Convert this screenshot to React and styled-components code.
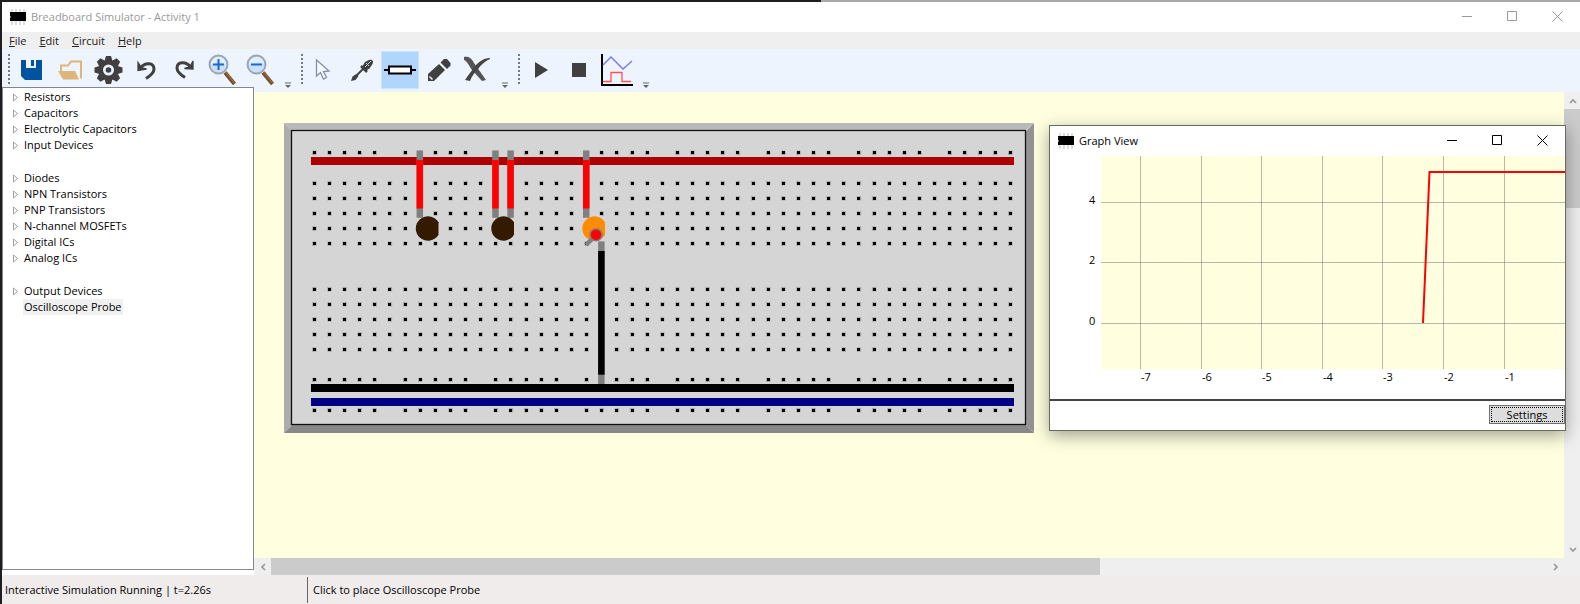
import React from "react";
import styled, { createGlobalStyle, css } from "styled-components";

const GlobalStyle = createGlobalStyle`
  *, *::before, *::after { box-sizing: border-box; }
  body { margin: 0; background: #fff; }
  button { font: inherit; color: inherit; padding: 0; border: 0; background: none; }
  ul { list-style: none; margin: 0; padding: 0; }
  svg { display: block; flex: none; }
`;

const UI_FONT = `"Open Sans", "Noto Sans", sans-serif`;

const Frame = styled.div`
  position: relative;
  display: flex;
  flex-direction: column;
  min-height: 100vh;
  border-left: 2px solid #1f1f22;
  border-top: 2px solid #a8a8a8;
  background: #fff;
  color: #000;
  font: 11px/16px ${UI_FONT};
  &::before {
    content: "";
    position: absolute;
    top: -2px;
    left: -2px;
    width: 52%;
    height: 2px;
    background: #1f1f22;
  }
`;

const TitleBar = styled.header`
  display: flex;
  align-items: center;
  height: 30px;
  padding: 0 0 1px 8px;
  background: #fff;
  color: ${(p) => (p.$active ? "#000" : "#999")};
`;

const Title = styled.h1`
  flex: 1;
  margin: 0 0 0 5px;
  font-size: 11px;
  font-weight: 400;
`;

const CaptionButton = styled.button`
  display: grid;
  place-items: center;
  width: 45px;
  height: 29px;
`;

const MenuBar = styled.nav`
  display: flex;
  height: 17px;
  background: #efefef;
`;

const MenuItem = styled.button`
  padding: 0 6px 0 7px;
  line-height: 17px;
  color: #222;
  &::first-letter { text-decoration: underline; }
`;

const ToolTray = styled.div`
  display: flex;
  gap: 4px;
  height: 43px;
  background: #edf4fd;
`;

const ToolGroup = styled.div`
  display: flex;
  padding-top: 2px;
`;

const Grip = styled.span`
  width: 2px;
  height: 31px;
  margin: 3px 2px 0 6px;
  background: repeating-linear-gradient(#77797d 0 2px, transparent 2px 4px);
`;

const ToolButton = styled.button`
  display: grid;
  place-items: center;
  width: 38px;
  height: 38px;
  ${(p) => p.$selected && css`background: #b1d6fd; border: 1px solid #cfe4fb;`}
`;

const OverflowButton = styled.button`
  display: flex;
  align-items: flex-end;
  justify-content: flex-end;
  width: 13px;
  height: 38px;
`;

const Workspace = styled.main`
  position: relative;
  display: flex;
  flex: 1;
`;

const Sidebar = styled.aside`
  position: relative;
  width: 252px;
  margin: -5px 0 5px;
  padding-top: 1px;
  border: 1px solid #828790;
  background: #fff;
`;

const TreeRow = styled.li`
  display: flex;
  align-items: center;
  height: ${(p) => (p.$blank ? "17px" : "16px")};
  padding-left: 9px;
`;

const Twisty = styled.span`
  width: 11px;
`;

const TreeLabel = styled.button`
  padding: 0 1px;
  line-height: 16px;
  background: ${(p) => (p.$selected ? "#f0f0f0" : "none")};
`;

const Viewport = styled.div`
  display: grid;
  flex: 1;
  min-width: 0;
  grid-template-columns: minmax(0, 1fr) 16px;
  grid-template-rows: 1fr 17px;
  background: #efefef;
`;

const Canvas = styled.section`
  overflow: hidden;
  padding: 31px 30px;
  background: #ffffe0;
`;

const ScrollBar = styled.div`
  display: flex;
  flex-direction: ${(p) => (p.$vertical ? "column" : "row")};
  background: #efefef;
`;

const ScrollButton = styled.button`
  display: grid;
  place-items: center;
  width: 17px;
  height: 17px;
`;

const ScrollTrack = styled.div`
  display: grid;
  flex: 1;
  ${(p) => (p.$vertical ? css`grid-template-rows: 23% 1fr;` : css`grid-template-columns: 65% 1fr;`)}
`;

const ScrollThumb = styled.div`
  background: #cbcbcb;
`;

const StatusBar = styled.footer`
  display: flex;
  align-items: center;
  height: 29px;
  background: #f0ecec;
`;

const StatusCell = styled.div`
  display: flex;
  align-items: center;
  height: 26px;
  padding-left: ${(p) => (p.$divided ? "5px" : "3px")};
  width: ${(p) => (p.$divided ? "auto" : "305px")};
  border-left: ${(p) => (p.$divided ? "1px solid #666" : "0")};
`;

const GraphWindow = styled.section`
  position: absolute;
  top: 33px;
  right: 14px;
  width: 517px;
  border: 1px solid #6a6a62;
  background: #fff;
  box-shadow: 0 5px 16px rgba(0, 0, 0, 0.36);
`;

const GraphFooter = styled.div`
  display: flex;
  justify-content: flex-end;
  height: 31px;
  padding-top: 4px;
  border-top: 2px solid #444;
`;

const SettingsButton = styled.button`
  width: 76px;
  height: 19px;
  line-height: 15px;
  border: 1px solid #707070;
  background: #ddd;
  outline: 1px dotted #000;
  outline-offset: -3px;
`;

const ChipIcon = () => (
  <svg width="16" height="16" viewBox="0 0 16 16" aria-hidden="true">
    <path d="M2 0v16M6 0v16M10 0v16M14 0v16" stroke="#ddd" strokeWidth="2" />
    <path d="M0 3h16v9H0z" fill="#000" />
    <path d="M0 7h1v2H0z" fill="#777" />
  </svg>
);

const WindowControls = () => (
  <>
    <CaptionButton aria-label="Minimize">
      <svg width="11" height="11" stroke="currentColor"><path d="M0 5.500h10" /></svg>
    </CaptionButton>
    <CaptionButton aria-label="Maximize">
      <svg width="11" height="11" stroke="currentColor" fill="none"><path d="M.5 .5h9v9h-9z" /></svg>
    </CaptionButton>
    <CaptionButton aria-label="Close">
      <svg width="11" height="11" stroke="currentColor"><path d="M.5 .5l10 10M10.500 .5l-10 10" /></svg>
    </CaptionButton>
  </>
);

const Icon = ({ children }) => (
  <svg width="36" height="36" viewBox="0 0 36 36" fill="none" aria-hidden="true">{children}</svg>
);

const SaveIcon = () => (
  <Icon>
    <path d="M8 8h21v20H12l-4-4z" fill="#0053a0" />
    <path d="M13 8h10v8H13z" fill="#edf4fd" />
    <path d="M18 8h3v6h-3z" fill="#0053a0" />
  </Icon>
);

const OpenIcon = () => (
  <Icon>
    <path d="M10 20v-6.500h7l3-4h10v17" stroke="#dfb67a" strokeWidth="2" />
    <path d="M7 19h17l4 8.500H12z" fill="#dfb67a" />
  </Icon>
);

const GearIcon = () => (
  <Icon>
    <g fill="#404040">
      {[0, 45, 90, 135].map((a) => (
        <path key={a} d="M17 4h5l1.500 5v18L22 32h-5l-1.500-5V9z" transform={`rotate(${a} 19.500 18)`} />
      ))}
      <circle cx="19.500" cy="18" r="10" />
    </g>
    <circle cx="19.500" cy="18" r="5.500" fill="#edf4fd" />
    <circle cx="19.500" cy="18" r="2.800" fill="#404040" />
  </Icon>
);

const UndoIcon = () => (
  <Icon>
    <path d="M13.500 16C18 10 27 10.500 27 17c0 4-4 7-8 9.500" stroke="#404040" strokeWidth="3" />
    <path d="M11 10.500v8l8.500-1.500-5-1.500z" fill="#404040" stroke="#404040" strokeWidth="1.300" />
  </Icon>
);

const RedoIcon = () => (
  <Icon>
    <path d="M25.500 15C21 9 12 9.500 12 16c0 4 4 7 8 9.500" stroke="#404040" strokeWidth="3" />
    <path d="M28 9v8l-8.500-.5 5.500-2z" fill="#404040" stroke="#404040" strokeWidth="1.300" />
  </Icon>
);

const ZoomIcon = ({ plus }) => (
  <Icon>
    <path d="M22 20.500l9.500 11.500" stroke="#77502f" strokeWidth="4" />
    <path d="M22.500 20l9 11" stroke="#a8784d" strokeWidth="1" />
    <circle cx="15.500" cy="12.500" r="9" fill="#c9e1fd" stroke="#9ca6b2" strokeWidth="2" />
    <path d="M8 12.500a7.500 7.500 0 0115 0c-4-3-10-2-15 0z" fill="#e2effe" />
    <path d="M10 12.500h11" stroke="#1d69cf" strokeWidth="2" />
    {plus && <path d="M15.500 7v11" stroke="#1d69cf" strokeWidth="2" />}
  </Icon>
);

const PointerIcon = () => (
  <Icon>
    <path d="M10.500 8v16l4-3.500 3 6.500 3-1.500-3-6 5.500-.5z" fill="#f7fafe" stroke="#8491a3" strokeWidth="1.300" />
  </Icon>
);

const ScrewdriverIcon = () => (
  <Icon>
    <path d="M7 29l1.500-4.500 4-2.500 2 2-3 4z" fill="#404040" />
    <path d="M12 24l8-8" stroke="#404040" strokeWidth="2" />
    <path d="M17 14l6 6" stroke="#404040" strokeWidth="2.500" />
    <path d="M18 15l3-5 4-2c3-1 5 1 3.500 4l-3 4.500-4 2.500z" fill="#404040" />
    <path d="M21 15l6-6M22 11l3 3" stroke="#cbd0d6" />
  </Icon>
);

const ResistorIcon = () => (
  <Icon>
    <path d="M2 18h32" stroke="#000" strokeWidth="2" />
    <path d="M7 14.500h22v7H7z" fill="#fff" stroke="#000" strokeWidth="2" />
  </Icon>
);

const PencilIcon = () => (
  <Icon>
    <path d="M8 29v-7L19 12l6 6-11 11z" fill="#404040" />
    <path d="M20.500 10.500L24 7h3l3.500 4v2.500L27 17z" fill="#404040" />
    <path d="M9.500 24.500l3 3" stroke="#edf4fd" strokeWidth="1.500" />
  </Icon>
);

const DeleteIcon = () => (
  <Icon>
    <path d="M6 5c5-1 8 2 10 6l12 17-4 1L14 18C10 12 9 9 6 8z" fill="#555" />
    <path d="M32 6c-7 0-12 4-17 11-4 5-6 8-8 11l5 1c2-5 4-8 8-12 4-5 7-8 12-10z" fill="#454545" />
  </Icon>
);

const PlayIcon = () => (
  <Icon><path d="M12 10l13 8-13 8z" fill="#404040" /></Icon>
);

const StopIcon = () => (
  <Icon><path d="M11 11h14v14H11z" fill="#404040" /></Icon>
);

const ScopeIcon = () => (
  <Icon>
    <path d="M3 2v31h31" stroke="#000" strokeWidth="2" />
    <path d="M4 13l8-8 12 12 9-8" stroke="#7474ff" strokeWidth="1.300" />
    <path d="M4 29.500h8v-9h11v9h9" stroke="#ff5252" strokeWidth="1.300" />
  </Icon>
);

const Overflow = () => (
  <OverflowButton aria-label="More tools">
    <svg width="6" height="7"><path d="M0 1h6" stroke="#666" /><path d="M0 3h6L3 6z" fill="#666" /></svg>
  </OverflowButton>
);

const toolGroups = [
  [
    ["Save", SaveIcon],
    ["Open", OpenIcon],
    ["Options", GearIcon],
    ["Undo", UndoIcon],
    ["Redo", RedoIcon],
    ["Zoom in", () => <ZoomIcon plus />],
    ["Zoom out", ZoomIcon],
  ],
  [
    ["Select", PointerIcon],
    ["Adjust", ScrewdriverIcon],
    ["Component", ResistorIcon],
    ["Draw wire", PencilIcon],
    ["Delete", DeleteIcon],
  ],
  [
    ["Run", PlayIcon],
    ["Stop", StopIcon],
    ["Graph", ScopeIcon],
  ],
];

const treeItems = [
  "Resistors", "Capacitors", "Electrolytic Capacitors", "Input Devices", null,
  "Diodes", "NPN Transistors", "PNP Transistors", "N-channel MOSFETs", "Digital ICs", "Analog ICs", null,
  "Output Devices",
];

const PITCH = 15.13;
const colX = (c) => 30.3 + c * PITCH;
const rowY = (r) => 29.9 + r * PITCH;
const railRows = [0, 15, 17];
const fieldRows = [2, 3, 4, 5, 6, 9, 10, 11, 12, 13];
const columns = Array.from({ length: 47 }, (_, i) => i);

const Hole = ({ c, r }) => (
  <>
    <rect x={colX(c) - 2.2} y={rowY(r) - 2.2} width="4.400" height="4.400" fill="#a8a8a8" />
    <rect x={Math.round(colX(c) - 1.5)} y={Math.round(rowY(r) - 1.5)} width="3" height="3" fill="#000" />
  </>
);

const Wire = ({ c, top, bottom, color }) => (
  <g strokeWidth="6.500">
    <path d={`M${colX(c) - 0.4} ${top}V${bottom}`} stroke="#808080" />
    <path d={`M${colX(c) - 0.4} ${top + 9.5}V${bottom - 9.3}`} stroke={color} />
  </g>
);

const Led = ({ x, color }) => (
  <path d={`M${x + 10.5} 99.300a12.200 12.200 0 1 0 0 12.400z`} fill={color} />
);

const Breadboard = () => (
  <svg width="750" height="310" viewBox="0 0 750 310" role="img" aria-label="Breadboard">
    <path d="M0 0h750l-8 7H7z" fill="#b9b9b9" />
    <path d="M0 0l8 8v294l-8 8z" fill="#acacac" />
    <path d="M750 0l-8 8v294l8 8z" fill="#939393" />
    <path d="M0 310l8-8h734l8 8z" fill="#888" />
    <rect x="7.500" y="7.500" width="734" height="294" fill="#d5d5d5" stroke="#111" strokeWidth="1.300" />
    {railRows.map((r) => columns.filter((c) => c % 6 !== 5).map((c) => <Hole key={`${r}-${c}`} c={c} r={r} />))}
    {fieldRows.map((r) => columns.map((c) => <Hole key={`${r}-${c}`} c={c} r={r} />))}
    <path d="M27 34h703v8H27z" fill="#ad0000" />
    <path d="M27 261h703v8H27z" fill="#000" />
    <path d="M27 275h703v8H27z" fill="#000084" />
    {[7, 12, 13, 18].map((c) => <Wire key={c} c={c} top={27.5} bottom={94.8} color="#f00" />)}
    <Wire c={19} top={118.5} bottom={261} color="#000" />
    <Led x={144} color="#331a00" />
    <Led x={219.500} color="#331a00" />
    <Led x={310.500} color="#ff8c00" />
    <path d="M302 122l7-7" stroke="#808080" strokeWidth="4.500" />
    <circle cx="312" cy="111.700" r="6" fill="#f00" stroke="#808080" strokeWidth="1.600" />
  </svg>
);

const ChartText = styled.text`
  font: 11px ${UI_FONT};
  fill: #000;
`;

const GraphPlot = () => (
  <svg width="515" height="243" viewBox="0 0 515 243" role="img" aria-label="Oscilloscope trace">
    <path d="M51 0h464v213H51z" fill="#ffffe0" />
    {[7, 6, 5, 4, 3, 2, 1].map((n, i) => {
      const x = Math.round(90 + i * 60.6);
      return (
        <g key={n}>
          <path d={`M${x + 0.5} 0V213`} stroke="#808080" strokeOpacity=".55" />
          <ChartText x={x + 1} y="225">{`-${n}`}</ChartText>
        </g>
      );
    })}
    {[4, 2, 0].map((n, i) => {
      const y = Math.round(46 + i * 60.4);
      return (
        <g key={n}>
          <path d={`M51 ${y + 0.5}H515`} stroke="#808080" strokeOpacity=".55" />
          <ChartText x="39" y={y + 2}>{n}</ChartText>
        </g>
      );
    })}
    <path d="M373 167l6.500-151H515" fill="none" stroke="#f00" strokeWidth="2" />
  </svg>
);

const Chevron = ({ angle }) => (
  <svg width="8" height="8" viewBox="0 0 8 8" fill="none" stroke="#999" strokeWidth="1.700">
    <path d="M1 6l3-3 3 3" transform={`rotate(${angle} 4 4)`} />
  </svg>
);

export default function App() {
  return (
    <Frame>
      <GlobalStyle />
      <TitleBar>
        <ChipIcon />
        <Title>Breadboard Simulator - Activity 1</Title>
        <WindowControls />
      </TitleBar>
      <MenuBar>
        {["File", "Edit", "Circuit", "Help"].map((m) => <MenuItem key={m}>{m}</MenuItem>)}
      </MenuBar>
      <ToolTray>
        {toolGroups.map((tools, i) => (
          <ToolGroup key={i} role="toolbar">
            <Grip />
            {tools.map(([name, Glyph]) => (
              <ToolButton key={name} aria-label={name} $selected={name === "Component"}><Glyph /></ToolButton>
            ))}
            <Overflow />
          </ToolGroup>
        ))}
      </ToolTray>
      <Workspace>
        <Sidebar>
          <ul>
            {treeItems.map((item, i) => item ? (
              <TreeRow key={i}>
                <Twisty>
                  <svg width="7" height="9" fill="#fff" stroke="#a0a0a0"><path d="M1.500 1v7L5.500 4.500z" /></svg>
                </Twisty>
                <TreeLabel>{item}</TreeLabel>
              </TreeRow>
            ) : <TreeRow key={i} $blank />)}
            <TreeRow>
              <Twisty />
              <TreeLabel $selected>Oscilloscope Probe</TreeLabel>
            </TreeRow>
          </ul>
        </Sidebar>
        <Viewport>
          <Canvas><Breadboard /></Canvas>
          <ScrollBar $vertical>
            <ScrollButton aria-label="Scroll up"><Chevron angle={0} /></ScrollButton>
            <ScrollTrack $vertical><ScrollThumb /></ScrollTrack>
            <ScrollButton aria-label="Scroll down"><Chevron angle={180} /></ScrollButton>
          </ScrollBar>
          <ScrollBar>
            <ScrollButton aria-label="Scroll left"><Chevron angle={-90} /></ScrollButton>
            <ScrollTrack><ScrollThumb /></ScrollTrack>
            <ScrollButton aria-label="Scroll right"><Chevron angle={90} /></ScrollButton>
          </ScrollBar>
        </Viewport>
        <GraphWindow>
          <TitleBar $active>
            <ChipIcon />
            <Title as="h2">Graph View</Title>
            <WindowControls />
          </TitleBar>
          <GraphPlot />
          <GraphFooter><SettingsButton>Settings</SettingsButton></GraphFooter>
        </GraphWindow>
      </Workspace>
      <StatusBar>
        <StatusCell>Interactive Simulation Running | t=2.26s</StatusCell>
        <StatusCell $divided>Click to place Oscilloscope Probe</StatusCell>
      </StatusBar>
    </Frame>
  );
}
